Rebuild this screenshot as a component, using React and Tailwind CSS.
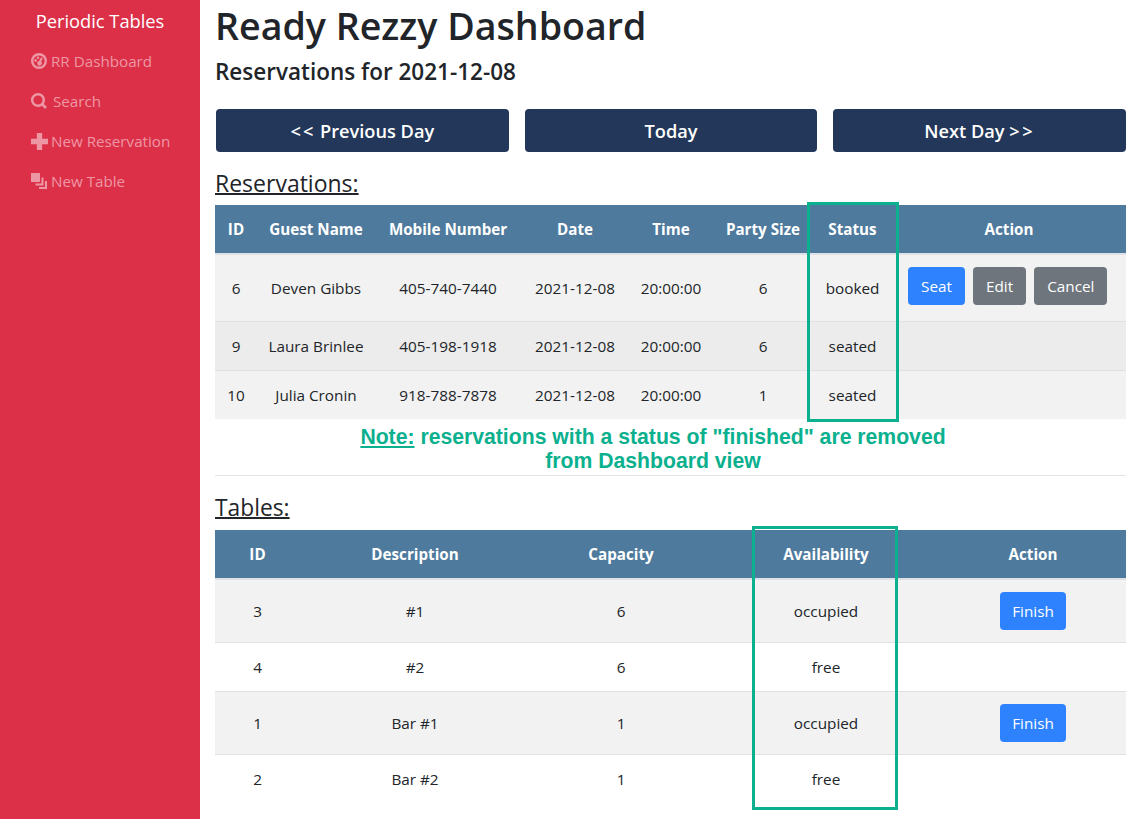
import React from "react";

const FONT = { fontFamily: "'Open Sans', 'Noto Sans', sans-serif" };

const DashboardIcon = () => (
  <svg viewBox="0 0 16 16" className="w-[16px] h-[16px] shrink-0" fill="currentColor">
    <path
      fillRule="evenodd"
      d="M8 0a8 8 0 1 1 0 16A8 8 0 0 1 8 0zm0 2.4a5.6 5.6 0 1 0 0 11.2A5.6 5.6 0 0 0 8 2.4z"
    />
    <circle cx="7" cy="4.8" r="1.3" />
    <circle cx="4.6" cy="7.4" r="1.3" />
    <path d="M10.2 4.2l1.6 1-1.6 3.4a2.3 2.3 0 1 1-2.2-.6z" />
  </svg>
);

const SearchIcon = () => (
  <svg viewBox="0 0 16 16" className="w-[16px] h-[16px] shrink-0" fill="currentColor">
    <path
      fillRule="evenodd"
      d="M7 0a7 7 0 0 1 5.8 10.9l3.2 3.2L14.100 16l-3.200-3.200A7 7 0 1 1 7 0zm0 2.400a4.600 4.600 0 1 0 0 9.200 4.600 4.600 0 0 0 0-9.200z"
    />
  </svg>
);

const PlusIcon = () => (
  <svg viewBox="0 0 16 16" className="w-[17px] h-[17px] shrink-0 -mr-px" fill="currentColor">
    <path d="M5.500 0h5v5.500H16v5h-5.500V16h-5v-5.500H0v-5h5.500z" />
  </svg>
);

const LayersIcon = () => (
  <svg viewBox="0 0 16 16" className="w-[16px] h-[16px] shrink-0" fill="currentColor">
    <path d="M0 0h9v9H0z" />
    <path d="M10.500 4.500H12.500V12.500H4.500V10.500H10.500z" />
    <path d="M14 8h2v8H8v-2h6z" />
  </svg>
);

const navItems = [
  { label: "RR Dashboard", icon: <DashboardIcon />, gap: "gap-[4px]" },
  { label: "Search", icon: <SearchIcon />, gap: "gap-[6px]" },
  { label: "New Reservation", icon: <PlusIcon />, gap: "gap-[4px]" },
  { label: "New Table", icon: <LayersIcon />, gap: "gap-[4px]" },
];

const Sidebar = () => (
  <aside className="w-[200px] shrink-0 bg-[#dc3049] h-[819px] flex flex-col items-start">
    <div className="w-full text-center text-white text-[18.300px] leading-[24px] pt-[9px] pb-[8px]">
      Periodic Tables
    </div>
    {navItems.map((item) => (
      <a
        key={item.label}
        className={`h-[40px] pl-[31px] flex items-center ${item.gap} text-[15.200px] text-[#ee97a4]`}
      >
        {item.icon}
        <span>{item.label}</span>
      </a>
    ))}
  </aside>
);

const Btn = ({ children, color = "bg-[#2e82fe]" }) => (
  <button className={`${color} text-white text-[15.300px] h-[38px] px-[13px] rounded-[4px]`}>{children}</button>
);

const reservations = [
  ["6", "Deven Gibbs", "405-740-7440", "2021-12-08", "20:00:00", "6", "booked"],
  ["9", "Laura Brinlee", "405-198-1918", "2021-12-08", "20:00:00", "6", "seated"],
  ["10", "Julia Cronin", "918-788-7878", "2021-12-08", "20:00:00", "1", "seated"],
];

const tables = [
  ["3", "#1", "6", "occupied", true],
  ["4", "#2", "6", "free", false],
  ["1", "Bar #1", "1", "occupied", true],
  ["2", "Bar #2", "1", "free", false],
];

const Th = ({ children }) => (
  <th className="h-[49px] p-0 text-center font-bold text-white text-[15.200px] border-b-2 border-[#dee2e6]">
    {children}
  </th>
);

const Td = ({ children, className = "" }) => (
  <td className={`p-0 text-center text-[15.300px] text-[#212529] ${className}`}>{children}</td>
);

const NavBtn = ({ children }) => (
  <button className="flex-1 h-[43px] pt-[2px] bg-[#223759] text-white text-[18.200px] font-semibold rounded-[4px]">
    {children}
  </button>
);

export default function App() {
  return (
    <div className="flex bg-white w-full h-[822px] overflow-hidden" style={FONT}>
      <Sidebar />
      <main className="flex-1 pl-[15px] pr-[16px] relative">
        <h1 className="text-[37.600px] leading-[44px] text-[#212529] font-semibold pt-[4px]">Ready Rezzy Dashboard</h1>
        <h4 className="text-[22.500px] leading-[29px] text-[#212529] font-semibold mt-[9px]">
          Reservations for 2021-12-08
        </h4>
        <div className="flex gap-4 pl-px mt-[23px]">
          <NavBtn>
            <span className="tracking-[2px]">&lt;&lt;</span> Previous Day
          </NavBtn>
          <NavBtn>Today</NavBtn>
          <NavBtn>
            Next Day <span className="tracking-[2.500px]">&gt;&gt;</span>
          </NavBtn>
        </div>

        <h4 className="text-[23px] leading-[29px] text-[#212529] font-medium underline decoration-2 mt-[17px] mb-[7px]">
          Reservations:
        </h4>
        <table className="w-full table-fixed border-collapse">
          <colgroup>
            <col className="w-[42px]" />
            <col className="w-[118px]" />
            <col className="w-[146px]" />
            <col className="w-[108px]" />
            <col className="w-[84px]" />
            <col className="w-[100px]" />
            <col className="w-[79px]" />
            <col />
          </colgroup>
          <thead className="bg-[#4e7a9d]">
            <tr>
              {["ID", "Guest Name", "Mobile Number", "Date", "Time", "Party Size", "Status", "Action"].map((h) => (
                <Th key={h}>{h}</Th>
              ))}
            </tr>
          </thead>
          <tbody>
            {reservations.map((row, i) => (
              <tr
                key={row[0]}
                className={`${i === 0 ? "h-[67px]" : "h-[49px]"} ${i === 1 ? "bg-[#ececec]" : "bg-[#f2f2f2]"} ${i > 0 ? "border-t border-[#dee2e6]" : ""}`}
              >
                {row.map((c, j) => (
                  <Td key={j} className={i === 0 ? "pt-px" : "pt-[2px]"}>
                    {c}
                  </Td>
                ))}
                <td className="p-0 align-top">
                  {i === 0 && (
                    <div className="flex gap-2 pl-[16px] pt-[12px]">
                      <Btn>Seat</Btn>
                      <Btn color="bg-[#6e757c]">Edit</Btn>
                      <Btn color="bg-[#6e757c]">Cancel</Btn>
                    </div>
                  )}
                </td>
              </tr>
            ))}
          </tbody>
        </table>

        <div
          className="text-center text-[#0bb08e] text-[21.200px] leading-[24px] font-bold pt-[6px] w-[600px] ml-[138px]"
          style={{ fontFamily: "'Liberation Sans', Arial, sans-serif" }}
        >
          <span className="underline">Note:</span> reservations with a status of "finished" are removed from Dashboard
          view
        </div>
        <hr className="border-[#e4e4e4] mt-[2px]" />

        <h4 className="text-[22.800px] leading-[29px] text-[#212529] font-medium underline decoration-2 mt-[17px] mb-[8px]">
          Tables:
        </h4>
        <table className="w-full table-fixed border-collapse">
          <colgroup>
            <col className="w-[85px]" />
            <col className="w-[230px]" />
            <col className="w-[182px]" />
            <col className="w-[228px]" />
            <col />
          </colgroup>
          <thead className="bg-[#4e7a9d]">
            <tr>
              {["ID", "Description", "Capacity", "Availability", "Action"].map((h) => (
                <Th key={h}>{h}</Th>
              ))}
            </tr>
          </thead>
          <tbody>
            {tables.map((row, i) => (
              <tr
                key={row[0]}
                className={`${row[4] ? "h-[63px] bg-[#f2f2f2]" : "h-[49px]"} ${i > 0 ? "border-t border-[#dee2e6]" : ""}`}
              >
                {row.slice(0, 4).map((c, j) => (
                  <Td key={j} className="pt-[2px]">
                    {c}
                  </Td>
                ))}
                <td className="p-0 text-center">
                  {row[4] && (
                    <button className="bg-[#2e82fe] text-white text-[15.300px] h-[38px] pt-px px-[12px] rounded-[4px]">
                      Finish
                    </button>
                  )}
                </td>
              </tr>
            ))}
          </tbody>
        </table>

        {/* green annotation boxes drawn over the screenshot */}
        <div className="absolute left-[607px] top-[202px] w-[92px] h-[220px] border-[3px] border-[#0bb08e]" />
        <div className="absolute left-[552px] top-[526px] w-[146px] h-[284px] border-[3px] border-[#0bb08e]" />
      </main>
    </div>
  );
}
